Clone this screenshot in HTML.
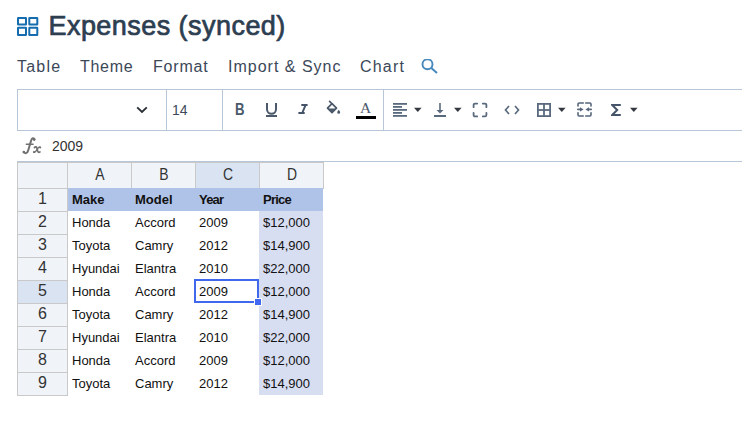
<!DOCTYPE html>
<html><head><meta charset="utf-8">
<style>
*{margin:0;padding:0;box-sizing:border-box}
html,body{width:742px;height:430px;background:#fff;overflow:hidden;font-family:"Liberation Sans",sans-serif;position:relative}
.abs{position:absolute}
#title{left:48.5px;top:10px;font-size:27px;font-weight:normal;color:#2c3e50;white-space:nowrap;line-height:32px;-webkit-text-stroke:0.7px #2c3e50;letter-spacing:0.45px}
.menu{top:56.5px;font-size:16px;color:#3b4858;white-space:nowrap;line-height:20px}
#tb{left:17px;top:89px;width:740px;height:42px;border:1px solid #b8c7d8;border-right:none}
.div{top:89px;width:1px;height:42px;background:#b8c7d8}
#fbline{left:17px;top:161px;width:725px;height:1px;background:#b8c7d8}
.tri{width:0;height:0;border-left:4px solid transparent;border-right:4px solid transparent;border-top:4.5px solid #2f3a48}
#grid{left:17px;top:162px;border-collapse:collapse}
.hc{position:absolute;background:#eff3f9;border:1px solid #c6c6c6;font-size:16px;color:#333;text-align:center}
.cell{position:absolute;font-size:13px;color:#111;white-space:nowrap;line-height:23px}
.hdr,.rhdr{font-size:16px;color:#333;text-align:center;line-height:25px}
.rhdr{line-height:23px}
.b{font-weight:bold}
</style></head><body>
<!-- title icon -->
<svg class="abs" style="left:17px;top:17px" width="22" height="20" viewBox="0 0 22 20">
<g fill="none" stroke="#156db0" stroke-width="2">
<rect x="1" y="1" width="8" height="6.5" rx="0.3"/>
<rect x="12.3" y="1" width="8" height="6.5" rx="0.3"/>
<rect x="1" y="10.8" width="8" height="7.2" rx="0.3"/>
<rect x="12.3" y="10.8" width="8" height="7.2" rx="0.3"/>
</g></svg>
<div id="title" class="abs">Expenses (synced)</div>
<div class="abs menu" style="left:17px;letter-spacing:1.2px">Table</div>
<div class="abs menu" style="left:80px;letter-spacing:0.7px">Theme</div>
<div class="abs menu" style="left:153px;letter-spacing:0.8px">Format</div>
<div class="abs menu" style="left:228px;letter-spacing:1.0px">Import &amp; Sync</div>
<div class="abs menu" style="left:360px;letter-spacing:1.2px">Chart</div>
<svg class="abs" style="left:421px;top:59px" width="18" height="16" viewBox="0 0 18 16">
<circle cx="6.5" cy="5.3" r="5" fill="none" stroke="#4689bd" stroke-width="1.9"/>
<line x1="10.3" y1="8.9" x2="16" y2="14" stroke="#4689bd" stroke-width="2"/>
</svg>

<!-- toolbar -->
<div id="tb" class="abs"></div>
<div class="abs div" style="left:166px"></div>
<div class="abs div" style="left:222px"></div>
<div class="abs div" style="left:383px"></div>
<svg class="abs" style="left:136px;top:106px" width="12" height="8" viewBox="0 0 12 8">
<polyline points="1.2,1.3 6,6 10.8,1.3" fill="none" stroke="#2a2f36" stroke-width="1.85"/>
</svg>
<div class="abs" style="left:172px;top:102px;font-size:14px;color:#3d4a5c;line-height:16px">14</div>
<div class="abs" style="left:234.5px;top:101px;font-size:16.5px;font-weight:bold;color:#4b596b;line-height:16px;transform:scaleX(0.8);transform-origin:0 0">B</div>
<svg class="abs" style="left:265px;top:102px" width="13" height="16" viewBox="0 0 13 16">
<path d="M2,1 V7.3 A4.5,4.5 0 0 0 11,7.3 V1" fill="none" stroke="#4b596b" stroke-width="2"/>
<rect x="1" y="13" width="11" height="2" fill="#4b596b"/>
</svg>
<svg class="abs" style="left:297px;top:103px" width="12" height="12" viewBox="0 0 12 12"><path d="M4.3,1 H10.6 V2.9 H9.2 L6.7,9.1 H7.7 V11 H1.4 V9.1 H4.6 L7.1,2.9 H4.3 Z" fill="#46546a"/></svg>
<svg class="abs" style="left:326px;top:100px" width="16" height="16" viewBox="0 0 16 16">
<path d="M3.6,1.4 L6.2,4" stroke="#4b596b" stroke-width="1.7" stroke-linecap="round"/>
<path d="M6,3.6 L10.5,8.1 L6,12.6 L1.5,8.1 Z" fill="none" stroke="#4b596b" stroke-width="1.7" stroke-linejoin="round"/>
<path d="M1.6,8.6 H10.4 L6,13 Z" fill="#4b596b"/>
<path d="M12.7,9.7 C13.5,10.9 14.2,11.5 14.2,12.3 A1.5,1.5 0 0 1 11.2,12.3 C11.2,11.5 11.9,10.9 12.7,9.7 Z" fill="#4b596b"/>
</svg>
<div class="abs" style="left:360px;top:99.5px;font-size:15.5px;font-family:'Liberation Serif',serif;color:#4b596b;line-height:16px">A</div>
<div class="abs" style="left:356px;top:116px;width:20px;height:3px;background:#000"></div>
<!-- align left -->
<svg class="abs" style="left:392px;top:102px" width="16" height="16" viewBox="0 0 16 16">
<g fill="#5a6a7e"><rect x="1" y="1" width="14" height="1.8"/><rect x="1" y="4" width="9" height="1.8"/><rect x="1" y="7" width="14" height="1.8"/><rect x="1" y="10" width="9" height="1.8"/><rect x="1" y="13" width="14" height="1.8"/></g>
</svg>
<svg class="abs" style="left:414px;top:107px" width="8" height="6" viewBox="0 0 8 6"><path d="M0,0.8 H7.6 L3.8,4.9 Z" fill="#343840"/></svg>
<!-- valign bottom -->
<svg class="abs" style="left:433px;top:102px" width="14" height="16" viewBox="0 0 14 16">
<line x1="7" y1="1" x2="7" y2="10" stroke="#5a6a7e" stroke-width="1.6"/>
<path d="M3.5,8 L10.5,8 L7,11.5 Z" fill="#5a6a7e"/>
<rect x="1" y="13" width="12" height="2" fill="#5a6a7e"/>
</svg>
<svg class="abs" style="left:454px;top:107px" width="8" height="6" viewBox="0 0 8 6"><path d="M0,0.8 H7.6 L3.8,4.9 Z" fill="#343840"/></svg>
<!-- fullscreen -->
<svg class="abs" style="left:472px;top:102px" width="16" height="16" viewBox="0 0 16 16">
<g fill="none" stroke="#5a6a7e" stroke-width="1.8" stroke-linecap="round">
<path d="M1.6,5.2 V3 A1.4,1.4 0 0 1 3,1.6 H5.2"/><path d="M10.8,1.6 H13 A1.4,1.4 0 0 1 14.4,3 V5.2"/><path d="M14.4,10.8 V13 A1.4,1.4 0 0 1 13,14.4 H10.8"/><path d="M5.2,14.4 H3 A1.4,1.4 0 0 1 1.6,13 V10.8"/>
</g></svg>
<!-- code -->
<svg class="abs" style="left:504px;top:105px" width="16" height="10" viewBox="0 0 16 10">
<g fill="none" stroke="#5a6a7e" stroke-width="1.7"><polyline points="5,1 1.5,5 5,9"/><polyline points="11,1 14.5,5 11,9"/></g>
</svg>
<!-- table grid -->
<svg class="abs" style="left:537px;top:103px" width="15" height="15" viewBox="0 0 15 15">
<g fill="none" stroke="#5a6a7e" stroke-width="1.8"><rect x="0.9" y="0.9" width="12.2" height="12.2"/><line x1="7" y1="1" x2="7" y2="13"/><line x1="1" y1="7" x2="13" y2="7"/></g>
</svg>
<svg class="abs" style="left:558px;top:107px" width="8" height="6" viewBox="0 0 8 6"><path d="M0,0.8 H7.6 L3.8,4.9 Z" fill="#343840"/></svg>
<!-- merge -->
<svg class="abs" style="left:577px;top:102px" width="16" height="16" viewBox="0 0 16 16">
<g fill="none" stroke="#56667b" stroke-width="1.6" stroke-linecap="round">
<path d="M1,4 V2.2 A1.2,1.2 0 0 1 2.2,1 H6.3"/><path d="M8.7,1 H12.8 A1.2,1.2 0 0 1 14,2.2 V4"/>
<path d="M14,10.8 V12.8 A1.2,1.2 0 0 1 12.8,14 H8.7"/><path d="M6.3,14 H2.2 A1.2,1.2 0 0 1 1,12.8 V10.8"/>
<path d="M0.8,7.4 H4"/><path d="M14.2,7.4 H11"/>
</g>
<g fill="#56667b"><path d="M3,5.2 L6.6,7.4 L3,9.6 Z"/><path d="M12,5.2 L8.4,7.4 L12,9.6 Z"/></g>
</svg>
<!-- sigma -->
<svg class="abs" style="left:610.5px;top:104px" width="11" height="12" viewBox="0 0 11 12">
<path d="M9.8,1 H1.2 L6.2,6 L1.2,11 H9.8" fill="none" stroke="#46546a" stroke-width="2"/>
</svg>
<svg class="abs" style="left:630px;top:107px" width="8" height="6" viewBox="0 0 8 6"><path d="M0,0.8 H7.6 L3.8,4.9 Z" fill="#343840"/></svg>

<!-- formula bar -->
<svg class="abs" style="left:18px;top:134px" width="28" height="24" viewBox="0 0 28 24">
<g fill="none" stroke="#707070" stroke-linecap="round">
<path d="M16.4,5.4 C16,4.1 14.6,3.9 13.7,5.2 C12.7,6.8 10.6,16.3 9.5,17.9 C8.7,19.2 7.2,19.6 6.1,18.6" stroke-width="2"/>
<path d="M8.3,10.3 H15.1" stroke-width="1.4"/>
<path d="M16.4,13.6 C17.4,12.4 18.6,12.6 19,14.1 L19.7,17 C20.1,18.5 20.9,18.7 22,17.9" stroke-width="1.7"/>
<path d="M22.4,13.2 C21.5,12.7 20.8,13 19.8,14.3 L17.9,17.2 C17.1,18.4 16.4,18.7 15.8,18.2" stroke-width="1.3"/>
</g>
<g fill="#707070"><circle cx="16.2" cy="5.6" r="1.35"/><circle cx="5.8" cy="18" r="1.35"/><circle cx="22.2" cy="13.5" r="1.05"/><circle cx="16" cy="18" r="1.05"/></g>
</svg>
<div class="abs" style="left:52px;top:138px;font-size:14px;color:#333;line-height:16px">2009</div>
<div id="fbline" class="abs"></div>

<!-- grid -->
<div id="gridwrap">
<div class="abs" style="left:17px;top:162px;width:307px;height:27px;background:#f0f4f9"></div>
<div class="abs" style="left:17px;top:188px;width:51px;height:208px;background:#f0f4f9"></div>
<div class="abs" style="left:195px;top:162px;width:64px;height:27px;background:#d9e3f2"></div>
<div class="abs" style="left:17px;top:280px;width:51px;height:24px;background:#d9e3f2"></div>
<div class="abs" style="left:17px;top:162px;width:307px;height:1px;background:#c9c9c9"></div>
<div class="abs" style="left:17px;top:188px;width:307px;height:1px;background:#c9c9c9"></div>
<div class="abs" style="left:17px;top:211px;width:51px;height:1px;background:#c9c9c9"></div>
<div class="abs" style="left:17px;top:234px;width:51px;height:1px;background:#c9c9c9"></div>
<div class="abs" style="left:17px;top:257px;width:51px;height:1px;background:#c9c9c9"></div>
<div class="abs" style="left:17px;top:280px;width:51px;height:1px;background:#c9c9c9"></div>
<div class="abs" style="left:17px;top:303px;width:51px;height:1px;background:#c9c9c9"></div>
<div class="abs" style="left:17px;top:326px;width:51px;height:1px;background:#c9c9c9"></div>
<div class="abs" style="left:17px;top:349px;width:51px;height:1px;background:#c9c9c9"></div>
<div class="abs" style="left:17px;top:372px;width:51px;height:1px;background:#c9c9c9"></div>
<div class="abs" style="left:17px;top:395px;width:51px;height:1px;background:#c9c9c9"></div>
<div class="abs" style="left:17px;top:162px;width:1px;height:234px;background:#c9c9c9"></div>
<div class="abs" style="left:67px;top:162px;width:1px;height:234px;background:#c9c9c9"></div>
<div class="abs" style="left:131px;top:162px;width:1px;height:27px;background:#c9c9c9"></div>
<div class="abs" style="left:195px;top:162px;width:1px;height:27px;background:#c9c9c9"></div>
<div class="abs" style="left:259px;top:162px;width:1px;height:27px;background:#c9c9c9"></div>
<div class="abs" style="left:323px;top:162px;width:1px;height:27px;background:#c9c9c9"></div>
<div class="abs" style="left:68px;top:188px;width:255px;height:23px;background:#afc3e8"></div>
<div class="abs" style="left:259px;top:211px;width:64px;height:184px;background:#d8def1"></div>
<div class="abs hdr" style="left:67.8px;top:162px;width:64px;transform:scaleX(0.87)">A</div>
<div class="abs hdr" style="left:131.8px;top:162px;width:64px;transform:scaleX(0.87)">B</div>
<div class="abs hdr" style="left:195.8px;top:162px;width:64px;transform:scaleX(0.87)">C</div>
<div class="abs hdr" style="left:259.8px;top:162px;width:64px;transform:scaleX(0.87)">D</div>
<div class="abs rhdr" style="left:17px;top:187px;width:51px">1</div>
<div class="abs rhdr" style="left:17px;top:210px;width:51px">2</div>
<div class="abs rhdr" style="left:17px;top:233px;width:51px">3</div>
<div class="abs rhdr" style="left:17px;top:256px;width:51px">4</div>
<div class="abs rhdr" style="left:17px;top:279px;width:51px">5</div>
<div class="abs rhdr" style="left:17px;top:302px;width:51px">6</div>
<div class="abs rhdr" style="left:17px;top:325px;width:51px">7</div>
<div class="abs rhdr" style="left:17px;top:348px;width:51px">8</div>
<div class="abs rhdr" style="left:17px;top:371px;width:51px">9</div>
<div class="abs cell b" style="left:72px;top:188px">Make</div>
<div class="abs cell b" style="left:135px;top:188px">Model</div>
<div class="abs cell b" style="left:199px;top:188px;letter-spacing:-0.8px">Year</div>
<div class="abs cell b" style="left:263px;top:188px;letter-spacing:-0.75px">Price</div>
<div class="abs cell" style="left:72px;top:211px">Honda</div>
<div class="abs cell" style="left:135px;top:211px">Accord</div>
<div class="abs cell" style="left:199px;top:211px">2009</div>
<div class="abs cell" style="left:263px;top:211px">$12,000</div>
<div class="abs cell" style="left:72px;top:234px">Toyota</div>
<div class="abs cell" style="left:135px;top:234px">Camry</div>
<div class="abs cell" style="left:199px;top:234px">2012</div>
<div class="abs cell" style="left:263px;top:234px">$14,900</div>
<div class="abs cell" style="left:72px;top:257px">Hyundai</div>
<div class="abs cell" style="left:135px;top:257px">Elantra</div>
<div class="abs cell" style="left:199px;top:257px">2010</div>
<div class="abs cell" style="left:263px;top:257px">$22,000</div>
<div class="abs cell" style="left:72px;top:280px">Honda</div>
<div class="abs cell" style="left:135px;top:280px">Accord</div>
<div class="abs cell" style="left:199px;top:280px">2009</div>
<div class="abs cell" style="left:263px;top:280px">$12,000</div>
<div class="abs cell" style="left:72px;top:303px">Toyota</div>
<div class="abs cell" style="left:135px;top:303px">Camry</div>
<div class="abs cell" style="left:199px;top:303px">2012</div>
<div class="abs cell" style="left:263px;top:303px">$14,900</div>
<div class="abs cell" style="left:72px;top:326px">Hyundai</div>
<div class="abs cell" style="left:135px;top:326px">Elantra</div>
<div class="abs cell" style="left:199px;top:326px">2010</div>
<div class="abs cell" style="left:263px;top:326px">$22,000</div>
<div class="abs cell" style="left:72px;top:349px">Honda</div>
<div class="abs cell" style="left:135px;top:349px">Accord</div>
<div class="abs cell" style="left:199px;top:349px">2009</div>
<div class="abs cell" style="left:263px;top:349px">$12,000</div>
<div class="abs cell" style="left:72px;top:372px">Toyota</div>
<div class="abs cell" style="left:135px;top:372px">Camry</div>
<div class="abs cell" style="left:199px;top:372px">2012</div>
<div class="abs cell" style="left:263px;top:372px">$14,900</div>
<div class="abs" style="left:194px;top:279px;width:65px;height:24px;border:2px solid #3f68ec"></div>
<div class="abs" style="left:254px;top:298px;width:8px;height:8px;background:#4268f2;border:1px solid #fff"></div>
</div><!--end-->
</body></html>
